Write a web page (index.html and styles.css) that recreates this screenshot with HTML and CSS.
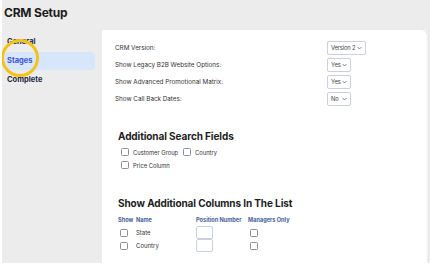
FILE: index.html
```html
<!DOCTYPE html>
<html lang="en">
<head>
    <meta charset="UTF-8" />
    <title>CRM Setup</title>
    <link rel="stylesheet" href="styles.css">
</head>
<body>
    <div class="frame">
        <h1 class="page-title">CRM Setup</h1>
        <div class="layout">
            <nav class="sidebar">
                <a class="nav-item">General</a>
                <a class="nav-item active">Stages</a>
                <a class="nav-item">Complete</a>
                <span class="highlight-ring"></span>
            </nav>

            <main class="panel">
                <div class="settings">
                    <div class="setting-row">
                        <span class="setting-label">CRM Version:</span>
                        <div class="fake-select wide"><span>Version 2</span><svg viewBox="0 0 8 5"><path d="M1 1l3 3 3-3" /></svg></div>
                    </div>
                    <div class="setting-row">
                        <span class="setting-label">Show Legacy B2B Website Options:</span>
                        <div class="fake-select"><span>Yes</span><svg viewBox="0 0 8 5"><path d="M1 1l3 3 3-3" /></svg></div>
                    </div>
                    <div class="setting-row">
                        <span class="setting-label">Show Advanced Promotional Matrix:</span>
                        <div class="fake-select"><span>Yes</span><svg viewBox="0 0 8 5"><path d="M1 1l3 3 3-3" /></svg></div>
                    </div>
                    <div class="setting-row">
                        <span class="setting-label">Show Call Back Dates:</span>
                        <div class="fake-select"><span>No</span><svg viewBox="0 0 8 5"><path d="M1 1l3 3 3-3" /></svg></div>
                    </div>
                </div>

                <h2 class="section-title">Additional Search Fields</h2>
                <div class="search-fields">
                    <label class="check"><span class="box"></span>Customer Group</label>
                    <label class="check"><span class="box"></span>Country</label>
                    <label class="check"><span class="box"></span>Price Column</label>
                </div>

                <h2 class="section-title second">Show Additional Columns In The List</h2>
                <div class="columns-table">
                    <span class="th">Show</span>
                    <span class="th">Name</span>
                    <span class="th">Position Number</span>
                    <span class="th">Managers Only</span>

                    <span class="cell"><span class="box"></span></span>
                    <span class="cell name">State</span>
                    <span class="cell"><span class="num-input"></span></span>
                    <span class="cell"><span class="box"></span></span>

                    <span class="cell"><span class="box"></span></span>
                    <span class="cell name">Country</span>
                    <span class="cell"><span class="num-input"></span></span>
                    <span class="cell"><span class="box"></span></span>
                </div>
            </main>
        </div>
    </div>
</body>
</html>
```

FILE: styles.css
```css
:root {
    --bg-color: #ececec;
    --panel-bg: #ffffff;
    --text-color: #2b2b2b;
    --nav-color: #1f2a44;
    --active-color: #3a55d6;
    --active-bg: #d7e6fb;
    --border-color: #c9d1e0;
    --th-color: #46629c;
    --ring-color: #f4c316;
}
html, body {
    margin: 0;
    padding: 0;
    background: #ffffff;
}
body {
    font-family: Inter, 'Liberation Sans', Arial, sans-serif;
    color: var(--text-color);
}
.frame {
    width: 428px;
    height: 263px;
    margin: 0 0 0 2px;
    background: var(--bg-color);
    display: flex;
    flex-direction: column;
    overflow: hidden;
}
.page-title {
    margin: 0;
    height: 30px;
    padding: 5px 0 0 2px;
    box-sizing: border-box;
    font-size: 12px;
    font-weight: 700;
    color: #1d1d1d;
    letter-spacing: -0.2px;
}
.layout {
    display: flex;
    flex: 1;
}
.sidebar {
    width: 100px;
    position: relative;
    display: flex;
    flex-direction: column;
    padding-top: 3px;
    gap: 1px;
}
.nav-item {
    display: block;
    width: 91px;
    height: 18px;
    line-height: 18px;
    padding-left: 3px;
    box-sizing: border-box;
    margin-left: 2px;
    font-size: 7.5px;
    font-weight: 700;
    color: var(--nav-color);
    border-radius: 4px;
}
.nav-item.active {
    background: var(--active-bg);
    color: var(--active-color);
}
.highlight-ring {
    position: absolute;
    left: -1px;
    top: 9px;
    width: 32px;
    height: 32px;
    border: 3.5px solid var(--ring-color);
    border-radius: 50%;
}
.panel {
    flex: 1;
    background: var(--panel-bg);
    border-top-right-radius: 6px;
    margin-right: 3px;
    padding: 10px 0 0 13px;
}
.settings {
    display: flex;
    flex-direction: column;
    gap: 2px;
    width: 251px;
}
.setting-row {
    display: flex;
    justify-content: space-between;
    align-items: center;
    height: 15px;
}
.setting-label {
    font-size: 6.3px;
    color: #333;
}
.fake-select {
    display: flex;
    align-items: center;
    justify-content: space-between;
    box-sizing: border-box;
    width: 39px;
    height: 14px;
    padding: 0 3px 0 3px;
    border: 1px solid var(--border-color);
    border-radius: 2px;
    font-size: 5.8px;
    color: #444;
    white-space: nowrap;
}
.fake-select.wide span {
    letter-spacing: -0.15px;
}
.fake-select:not(.wide) {
    width: 24px;
    margin-right: 15px;
}
.fake-select svg {
    flex-shrink: 0;
    width: 5px;
    height: 4px;
    fill: none;
    stroke: #555;
    stroke-width: 1.2;
}
.section-title {
    margin: 24px 0 6px 3px;
    font-size: 10px;
    font-weight: 700;
    color: #1d1d1d;
    letter-spacing: -0.1px;
}
.section-title.second {
    margin-top: 28px;
    margin-bottom: 7px;
}
.search-fields {
    display: grid;
    grid-template-columns: 62px auto;
    row-gap: 5px;
    width: 130px;
    padding-left: 6px;
}
.check {
    display: flex;
    align-items: center;
    gap: 4px;
    font-size: 5.8px;
    color: #333;
}
.box {
    display: inline-block;
    width: 6px;
    height: 6px;
    border: 1px solid #8a8f99;
    border-radius: 1.5px;
}
.columns-table {
    display: grid;
    grid-template-columns: 18px 60px 52px auto;
    grid-template-rows: 10px 13px 13px;
    width: 200px;
    padding-left: 3px;
}
.th {
    font-size: 5.6px;
    font-weight: 700;
    color: var(--th-color);
    line-height: 8px;
}
.cell {
    display: flex;
    align-items: center;
    font-size: 6px;
    color: #333;
}
.cell .box {
    margin-left: 2px;
}
.num-input {
    display: inline-block;
    width: 17px;
    height: 13px;
    border: 1px solid var(--border-color);
    border-radius: 2px;
    box-sizing: border-box;
}
```
